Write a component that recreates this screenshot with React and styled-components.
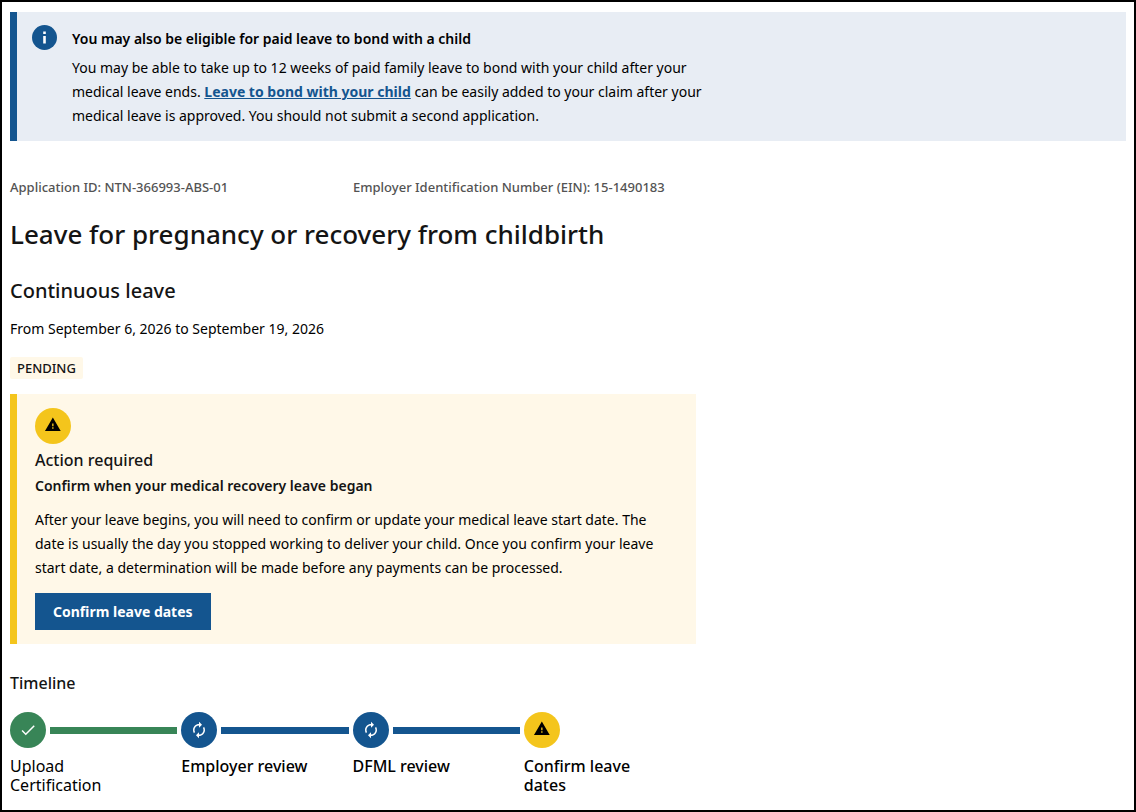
import styled, { createGlobalStyle } from 'styled-components';

const GlobalStyle = createGlobalStyle`
    *, *::before, *::after {
        box-sizing: border-box;
    }

    body {
        margin: 0;
        background-color: #ffffff;
        color: #141414;
        font-family: 'Noto Sans', sans-serif;
        font-size: 14px;
    }

    h1, h2, h3, h4, p, ol {
        margin: 0;
        padding: 0;
    }
`;

const Page = styled.main`
    min-height: 100vh;
    padding: 10px 8px 14px;
    border: 2px solid #000000;
`;

const InfoAlert = styled.section`
    display: flex;
    gap: 15px;
    padding: 13px 15px;
    border-left: 7px solid #14558f;
    background-color: #e8edf4;
    color: #000000;
    line-height: 24px;
`;

const AlertBody = styled.div`
    max-width: 660px;
`;

const AlertTitle = styled.h2`
    margin-bottom: 3px;
    font-size: 14px;
    font-weight: 600;
    line-height: 28px;
`;

const TextLink = styled.a`
    color: #14558f;
    font-weight: 700;
`;

const MetaRow = styled.div`
    display: flex;
    width: 686px;
    max-width: 100%;
    margin-top: 37px;
    color: #535353;
    font-size: 13px;
    font-weight: 500;
    line-height: 18px;

    p {
        flex: 1;
    }
`;

const PageTitle = styled.h1`
    margin-top: 20px;
    font-size: 26px;
    font-weight: 500;
    line-height: 36px;
`;

const LeaveType = styled.h2`
    margin-top: 25px;
    font-size: 20px;
    font-weight: 500;
    line-height: 28px;
`;

const DateRange = styled.p`
    margin-top: 12px;
    color: #000000;
    line-height: 24px;
`;

const StatusTag = styled.div`
    width: fit-content;
    margin-top: 16px;
    padding: 0 7px;
    border-radius: 2px;
    background-color: #fff8e8;
    font-size: 13px;
    font-weight: 500;
    line-height: 22px;
    text-transform: uppercase;
`;

const ActionCard = styled.section`
    max-width: 686px;
    margin-top: 15px;
    padding: 14px 18px;
    border-left: 7px solid #f4c51c;
    background-color: #fff8e8;
`;

const ActionTitle = styled.h3`
    margin-top: 4px;
    font-size: 16px;
    font-weight: 500;
    line-height: 24px;
`;

const ActionSubtitle = styled.h4`
    font-size: 14px;
    font-weight: 600;
    line-height: 28px;
`;

const ActionText = styled.p`
    max-width: 640px;
    margin-top: 8px;
    color: #000000;
    line-height: 24px;
`;

const Button = styled.button`
    margin-top: 13px;
    padding: 0 18px;
    border: 0;
    background-color: #14558f;
    color: #ffffff;
    cursor: pointer;
    font-family: inherit;
    font-size: 14px;
    font-weight: 700;
    line-height: 37px;
`;

const tones = {
    done: '#388557',
    progress: '#14558f',
    warning: '#f4c51c',
};

const IconCircle = styled.span`
    display: flex;
    flex: none;
    align-items: center;
    justify-content: center;
    width: 36px;
    height: 36px;
    border-radius: 50%;
    background-color: ${({ $tone }) => tones[$tone]};
    color: ${({ $tone }) => ($tone === 'warning' ? '#000000' : '#ffffff')};
`;

const TimelineTitle = styled.h3`
    margin-top: 27px;
    font-size: 16px;
    font-weight: 500;
    line-height: 24px;
`;

const Steps = styled.ol`
    display: flex;
    max-width: 685px;
    margin-top: 17px;
    list-style: none;
`;

const Step = styled.li`
    flex: 1;
    color: #000000;
    font-size: 16px;
    font-weight: ${({ $tone }) => ($tone === 'done' ? 400 : 500)};
    line-height: 19px;
`;

const StepTrack = styled.div`
    display: flex;
    align-items: center;
    gap: 4px;
    padding-right: 4px;
`;

const Connector = styled.span`
    flex: 1;
    height: 7px;
    background-color: ${({ $tone }) => tones[$tone]};
`;

const StepLabel = styled.p`
    max-width: 132px;
    margin-top: 9px;
`;

const InfoIcon = () => (
    <svg width="25" height="25" viewBox="0 0 25 25" aria-hidden="true">
        <circle cx="12.5" cy="12.5" r="12.5" fill="#14558f" />
        <path d="M11.2 6.5h2.6v2.4h-2.6zM11.2 10.9h2.6v7.5h-2.6z" fill="#ffffff" />
    </svg>
);

const WarningIcon = () => (
    <svg width="18" height="18" viewBox="0 0 24 24" fill="currentColor" aria-hidden="true">
        <path d="M1.3 18.7h21L11.8.7zm11.4-3h-1.8v-1.9h1.8v1.9zm0-3.3h-1.8V8.6h1.8v3.8z" />
    </svg>
);

const CheckIcon = () => (
    <svg width="18" height="18" viewBox="0 0 24 24" fill="currentColor" aria-hidden="true">
        <path d="M9 16.17 4.83 12l-1.42 1.41L9 19 21 7l-1.41-1.41z" />
    </svg>
);

const LoopIcon = () => (
    <svg width="18" height="18" viewBox="0 0 24 24" fill="currentColor" aria-hidden="true">
        <path d="M12 6v3l4-4-4-4v3c-4.42 0-8 3.58-8 8 0 1.57.46 3.03 1.24 4.26L6.7 14.8A5.87 5.87 0 0 1 6 12c0-3.31 2.69-6 6-6zm6.76 1.74L17.3 9.2c.44.84.7 1.79.7 2.8 0 3.31-2.69 6-6 6v-3l-4 4 4 4v-3c4.42 0 8-3.58 8-8 0-1.57-.46-3.03-1.24-4.26z" />
    </svg>
);

const icons = { done: CheckIcon, progress: LoopIcon, warning: WarningIcon };

const steps = [
    { label: 'Upload Certification', tone: 'done' },
    { label: 'Employer review', tone: 'progress' },
    { label: 'DFML review', tone: 'progress' },
    { label: 'Confirm leave dates', tone: 'warning' },
];

const Timeline = () => (
    <section>
        <TimelineTitle>Timeline</TimelineTitle>
        <Steps>
            {steps.map(({ label, tone }, index) => {
                const Icon = icons[tone];
                return (
                    <Step key={label} $tone={tone}>
                        <StepTrack>
                            <IconCircle $tone={tone}><Icon /></IconCircle>
                            {/* The last step has nothing to connect to */}
                            {index < steps.length - 1 && <Connector $tone={tone} />}
                        </StepTrack>
                        <StepLabel>{label}</StepLabel>
                    </Step>
                );
            })}
        </Steps>
    </section>
);

const App = () => {
    return (
        <>
            <GlobalStyle />
            <Page>
                <InfoAlert>
                    <InfoIcon />
                    <AlertBody>
                        <AlertTitle>You may also be eligible for paid leave to bond with a child</AlertTitle>
                        <p>
                            You may be able to take up to 12 weeks of paid family leave to bond with your child after your
                            medical leave ends. <TextLink href="#bonding">Leave to bond with your child</TextLink> can be
                            easily added to your claim after your medical leave is approved. You should not submit a second
                            application.
                        </p>
                    </AlertBody>
                </InfoAlert>

                <MetaRow>
                    <p>Application ID: NTN-366993-ABS-01</p>
                    <p>Employer Identification Number (EIN): 15-1490183</p>
                </MetaRow>
                <PageTitle>Leave for pregnancy or recovery from childbirth</PageTitle>
                <LeaveType>Continuous leave</LeaveType>
                <DateRange>From September 6, 2026 to September 19, 2026</DateRange>
                <StatusTag>Pending</StatusTag>

                <ActionCard>
                    <IconCircle $tone="warning"><WarningIcon /></IconCircle>
                    <ActionTitle>Action required</ActionTitle>
                    <ActionSubtitle>Confirm when your medical recovery leave began</ActionSubtitle>
                    <ActionText>
                        After your leave begins, you will need to confirm or update your medical leave start date. The date
                        is usually the day you stopped working to deliver your child. Once you confirm your leave start
                        date, a determination will be made before any payments can be processed.
                    </ActionText>
                    <Button type="button">Confirm leave dates</Button>
                </ActionCard>

                <Timeline />
            </Page>
        </>
    );
};

export default App;
